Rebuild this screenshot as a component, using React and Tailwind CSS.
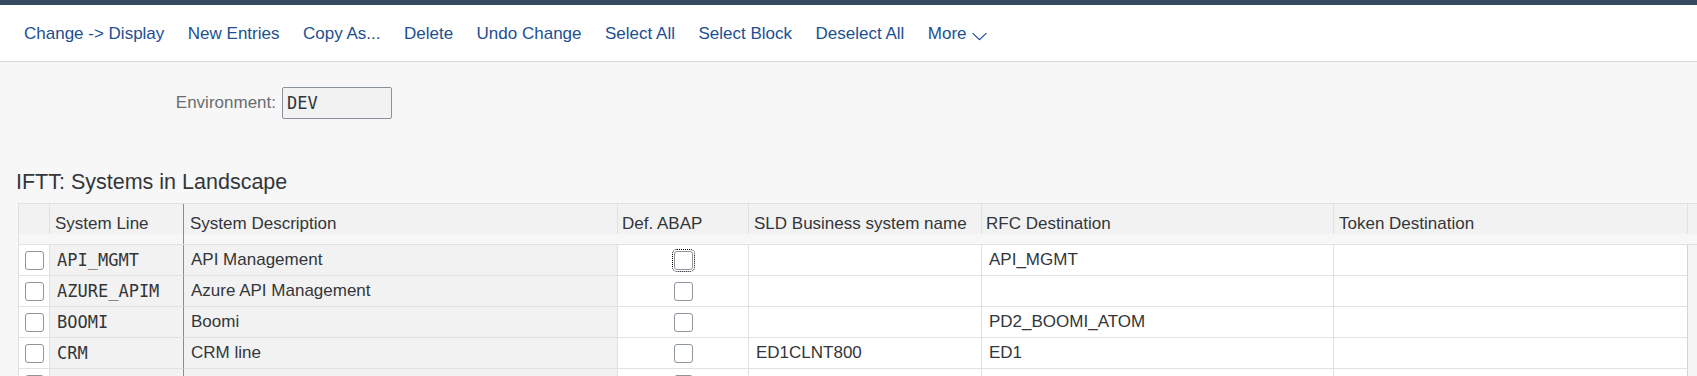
import React from 'react';

const toolbarItems = [
  'Change -> Display',
  'New Entries',
  'Copy As...',
  'Delete',
  'Undo Change',
  'Select All',
  'Select Block',
  'Deselect All',
];

const rows = [
  { id: 1, line: 'API_MGMT', desc: 'API Management', sld: '', rfc: 'API_MGMT', focused: true },
  { id: 2, line: 'AZURE_APIM', desc: 'Azure API Management', sld: '', rfc: '' },
  { id: 3, line: 'BOOMI', desc: 'Boomi', sld: '', rfc: 'PD2_BOOMI_ATOM' },
  { id: 4, line: 'CRM', desc: 'CRM line', sld: 'ED1CLNT800', rfc: 'ED1' },
  { id: 5, line: '', desc: '', sld: '', rfc: '' },
];

function Checkbox({ focused }) {
  return (
    <div
      className={
        focused
          ? 'w-[19px] h-[19px] rounded-[3px] border border-[#8f959c] bg-white outline-1 outline-dotted outline-black outline-offset-1'
          : 'w-[19px] h-[19px] rounded-[3px] border border-[#8f959c] bg-white'
      }
    />
  );
}

function HeaderRow() {
  return (
    <div className="grid grid-cols-[31px_134px_434px_131px_233px_352px_354px_10px] h-[30px] bg-[#f2f2f2] text-[17px] leading-[20px] text-[#32363a]">
      <div className="border-r border-[#e1e1e1]" />
      <div className="border-r border-[#8c8c8c] pl-[5px] pt-[10px] whitespace-nowrap">System Line</div>
      <div className="border-r border-[#e1e1e1] pl-[6px] pt-[10px] whitespace-nowrap">System Description</div>
      <div className="border-r border-[#e1e1e1] pl-[4px] pt-[10px] whitespace-nowrap">Def. ABAP</div>
      <div className="border-r border-[#e1e1e1] pl-[5px] pt-[10px] whitespace-nowrap">SLD Business system name</div>
      <div className="border-r border-[#e1e1e1] pl-[4px] pt-[10px] whitespace-nowrap">RFC Destination</div>
      <div className="border-r border-[#e1e1e1] pl-[5px] pt-[10px] whitespace-nowrap">Token Destination</div>
      <div />
    </div>
  );
}

function BodyRow({ row }) {
  return (
    <div className="grid grid-cols-[31px_134px_434px_131px_233px_352px_354px_10px] h-[31px] text-[17px] leading-[20px] text-[#32363a]">
      <div className="bg-white border-r border-b border-[#e1e1e1] flex items-center justify-center">
        <Checkbox />
      </div>
      <div className="bg-[#f2f2f2] border-r border-r-[#8c8c8c] border-b border-b-[#e1e1e1] flex items-center pl-[7px] font-['DejaVu_Sans_Mono',monospace] whitespace-nowrap">
        {row.line}
      </div>
      <div className="bg-[#f2f2f2] border-r border-b border-[#e1e1e1] flex items-center pl-[7px] whitespace-nowrap">
        {row.desc}
      </div>
      <div className="bg-white border-r border-b border-[#e1e1e1] flex items-center justify-center">
        <Checkbox focused={row.focused} />
      </div>
      <div className="bg-white border-r border-b border-[#e1e1e1] flex items-center pl-[7px] whitespace-nowrap">
        {row.sld}
      </div>
      <div className="bg-white border-r border-b border-[#e1e1e1] flex items-center pl-[7px] whitespace-nowrap">
        {row.rfc}
      </div>
      <div className="bg-white border-r border-r-[#d4d4d4] border-b border-b-[#e1e1e1]" />
      <div className="bg-[#f5f5f5]" />
    </div>
  );
}

export default function App() {
  return (
    <div className="w-[1697px] h-[376px] overflow-hidden bg-[#f7f7f7] font-['Liberation_Sans',Arial,sans-serif]">
      <div className="h-[5px] bg-[#354a5f]" />
      <div className="h-[57px] bg-white border-b border-[#d9d9d9] flex items-center pl-[24px] pt-[1px] gap-[23.5px] text-[17px] leading-[20px] text-[#1d4f91]">
        {toolbarItems.map((t) => (
          <span key={t} className="whitespace-nowrap">
            {t}
          </span>
        ))}
        <span className="flex items-center gap-[5px] whitespace-nowrap">
          More
          <svg width="15" height="8" viewBox="0 0 15 8" className="translate-y-[2.5px]">
            <polyline points="0.6,0.6 7.5,7.2 14.4,0.6" fill="none" stroke="#1d4f91" strokeWidth="1.2" />
          </svg>
        </span>
      </div>

      <div className="pt-[25px]">
        <div className="flex items-center h-[32px]">
          <div className="w-[276px] text-right text-[17px] leading-[20px] text-[#6a6d70]">Environment:</div>
          <div className="ml-[6px] w-[110px] h-[32px] border border-[#89919a] rounded-[2px] bg-[#f2f2f2] flex items-center pl-[4px] text-[17px] leading-[20px] text-[#32363a] font-['DejaVu_Sans_Mono',monospace]">
            DEV
          </div>
        </div>

        <div className="mt-[50px] pl-[16px] text-[21.5px] leading-[26px] text-[#32363a]">IFTT: Systems in Landscape</div>

        <div className="mt-[8px] ml-[18px] border-l border-t border-[#e1e1e1]">
          <HeaderRow />
          <div className="grid grid-cols-[165px_1fr] h-[11px] bg-[#f7f7f7] border-b border-[#e1e1e1]">
            <div className="border-r border-[#8c8c8c]" />
            <div />
          </div>
          {rows.map((r) => (
            <BodyRow key={r.id} row={r} />
          ))}
        </div>
      </div>
    </div>
  );
}
